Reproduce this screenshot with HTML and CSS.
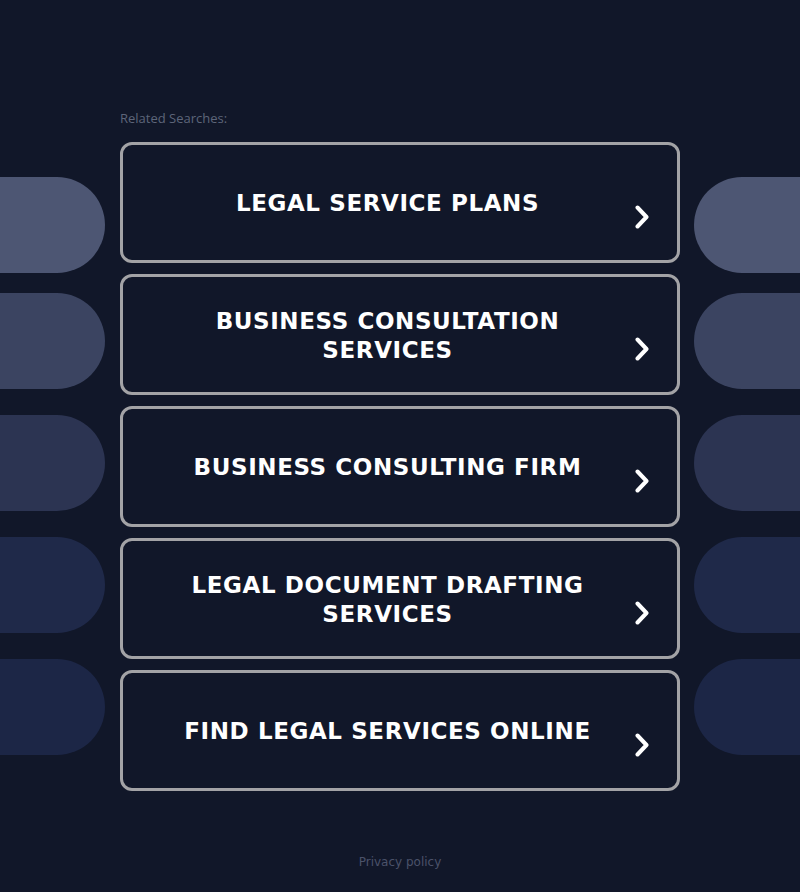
FILE: index.html
```html
<!DOCTYPE html>
<html>
<head>
<meta charset="utf-8">
<link rel="stylesheet" href="styles.css">
</head>
<body>
<div class="deco deco-left">
  <div class="pill p1"></div>
  <div class="pill p2"></div>
  <div class="pill p3"></div>
  <div class="pill p4"></div>
  <div class="pill p5"></div>
</div>
<div class="deco deco-right">
  <div class="pill p1"></div>
  <div class="pill p2"></div>
  <div class="pill p3"></div>
  <div class="pill p4"></div>
  <div class="pill p5"></div>
</div>
<main class="content">
  <div class="related">Related Searches:</div>
  <div class="list">
    <a class="item" href="#"><span class="label">LEGAL SERVICE PLANS</span><svg class="chev" viewBox="0 0 14 24"><path d="M2.5 2.5 L11.5 12 L2.5 21.5"/></svg></a>
    <a class="item" href="#"><span class="label">BUSINESS CONSULTATION SERVICES</span><svg class="chev" viewBox="0 0 14 24"><path d="M2.5 2.5 L11.5 12 L2.5 21.5"/></svg></a>
    <a class="item" href="#"><span class="label">BUSINESS CONSULTING FIRM</span><svg class="chev" viewBox="0 0 14 24"><path d="M2.5 2.5 L11.5 12 L2.5 21.5"/></svg></a>
    <a class="item" href="#"><span class="label">LEGAL DOCUMENT DRAFTING SERVICES</span><svg class="chev" viewBox="0 0 14 24"><path d="M2.5 2.5 L11.5 12 L2.5 21.5"/></svg></a>
    <a class="item" href="#"><span class="label">FIND LEGAL SERVICES ONLINE</span><svg class="chev" viewBox="0 0 14 24"><path d="M2.5 2.5 L11.5 12 L2.5 21.5"/></svg></a>
  </div>
  <footer class="footer"><a href="#">Privacy policy</a></footer>
</main>
</body>
</html>
```
FILE: styles.css
```css
html, body {
  margin: 0;
  padding: 0;
  background: #111729;
  height: 892px;
  overflow: hidden;
}
body {
  position: relative;
  font-family: "DejaVu Sans", sans-serif;
}
.deco {
  position: absolute;
  top: 177px;
  display: flex;
  flex-direction: column;
}
.deco-left { left: 0; width: 105px; }
.deco-right { left: 694px; width: 106px; }
.pill {
  height: 96px;
  margin-bottom: 26px;
}
.pill.p1 { margin-bottom: 20px; background: #4d5673; }
.pill.p2 { background: #3b4461; }
.pill.p3 { background: #2c3452; }
.pill.p4 { background: #1f2949; }
.pill.p5 { background: #1c2646; }
.deco-left .pill { border-radius: 0 48px 48px 0; }
.deco-right .pill { border-radius: 48px 0 0 48px; }

.content {
  position: relative;
  width: 560px;
  margin: 0 0 0 120px;
  padding-top: 110px;
}
.related {
  font-family: "Open Sans", sans-serif;
  font-size: 13px;
  font-weight: 500;
  line-height: 16px;
  color: #5d6579;
  margin-bottom: 16px;
}
.list {
  display: flex;
  flex-direction: column;
  gap: 11px;
}
.item {
  box-sizing: border-box;
  height: 121px;
  border: 3px solid #a3a3a6;
  border-radius: 12px;
  display: flex;
  align-items: center;
  padding: 2px 28px 0 40px;
  text-decoration: none;
  background: #111729;
}
.label {
  flex: 1;
  text-align: center;
  color: #ffffff;
  font-weight: bold;
  font-size: 23px;
  line-height: 29px;
  letter-spacing: 0.6px;
}
.chev {
  width: 14px;
  height: 24px;
  margin-top: 26px;
  margin-left: 23px;
  flex: none;
}
.chev path {
  fill: none;
  stroke: #ffffff;
  stroke-width: 4;
  stroke-linecap: round;
  stroke-linejoin: round;
}
.footer {
  text-align: center;
  margin-top: 63px;
  font-size: 12px;
  line-height: 16px;
}
.footer a {
  color: #4b5269;
  text-decoration: none;
}
```
